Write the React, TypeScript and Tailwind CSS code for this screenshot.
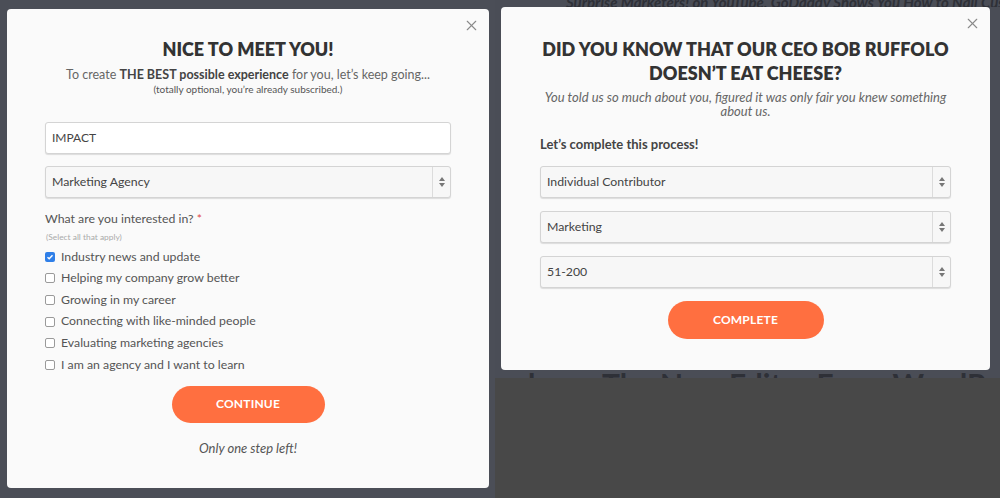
import { X } from 'lucide-react'

const font = "font-['Lato','Open_Sans',sans-serif]"

function CloseButton() {
  return (
    <button className="flex h-[17px] w-[17px] items-center justify-center text-[#8a8a8a]" aria-label="Close">
      <X size={17} strokeWidth={1.6} />
    </button>
  )
}

function SelectBox({ value }: { value: string }) {
  return (
    <div className="flex h-[32px] w-full items-stretch rounded-[3px] border border-[#d4d4d4] bg-[#f7f7f7] shadow-[0_1px_1px_rgba(0,0,0,0.12)]">
      <div className="flex flex-1 items-center pl-[6px] text-[12.3px] text-[#444]">{value}</div>
      <div className="flex w-[18px] flex-col items-center justify-center gap-[2px] border-l border-[#dcdcdc]">
        <span className="block h-0 w-0 border-x-[3px] border-b-[4px] border-x-transparent border-b-[#777]" />
        <span className="block h-0 w-0 border-x-[3px] border-t-[4px] border-x-transparent border-t-[#777]" />
      </div>
    </div>
  )
}

function Check({ label, checked }: { label: string; checked?: boolean }) {
  return (
    <div className="flex h-[21.6px] items-center gap-[6px]">
      {checked ? (
        <span className="flex h-[10px] w-[10px] items-center justify-center rounded-[2px] bg-[#2f7fe8]">
          <svg width="8" height="8" viewBox="0 0 8 8">
            <path d="M1.5 4.2 L3.2 5.8 L6.5 2.2" stroke="white" strokeWidth="1.4" fill="none" />
          </svg>
        </span>
      ) : (
        <span className="h-[10px] w-[10px] rounded-[2px] border border-[#9a9a9a] bg-white" />
      )}
      <span className="text-[12.3px] text-[#555]">{label}</span>
    </div>
  )
}

function OrangeButton({ label, w, h }: { label: string; w: string; h: string }) {
  return (
    <button className={`${w} ${h} rounded-full bg-[#ff6f40] text-[12px] font-bold tracking-[0.2px] text-white`}>
      {label}
    </button>
  )
}

function LeftModal() {
  return (
    <div className="flex h-[479px] w-[482px] flex-col rounded-[4px] bg-[#fafafa] px-[38px] pt-[8px]">
      <div className="-mr-[29px] flex justify-end">
        <CloseButton />
      </div>
      <h2 className="mt-[3px] text-center text-[18px] font-extrabold leading-[24px] text-[#333]">NICE TO MEET YOU!</h2>
      <p className="mt-[6px] text-center text-[12.5px] leading-[16px] text-[#666]">
        To create <b className="text-[#444]">THE BEST possible experience</b> for you, let’s keep going...
      </p>
      <p className="text-center text-[10px] leading-[12px] text-[#555]">(totally optional, you’re already subscribed.)</p>

      <div className="mt-[27px] flex h-[32px] items-center rounded-[3px] border border-[#d4d4d4] bg-white pl-[6px] text-[12px] text-[#444] shadow-[0_1px_1px_rgba(0,0,0,0.12)]">
        IMPACT
      </div>
      <div className="mt-[12px]">
        <SelectBox value="Marketing Agency" />
      </div>

      <p className="mt-[13px] text-[12.3px] leading-[16px] text-[#555]">
        What are you interested in? <span className="text-[#e04848]">*</span>
      </p>
      <p className="mt-[5px] pl-[1px] text-[8.4px] leading-[10px] text-[#aaa]">(Select all that apply)</p>
      <div className="mt-[4px] flex flex-col">
        <Check label="Industry news and update" checked />
        <Check label="Helping my company grow better" />
        <Check label="Growing in my career" />
        <Check label="Connecting with like-minded people" />
        <Check label="Evaluating marketing agencies" />
        <Check label="I am an agency and I want to learn" />
      </div>
      <div className="mt-[10px] flex justify-center">
        <OrangeButton label="CONTINUE" w="w-[153px]" h="h-[37px]" />
      </div>
      <p className="mt-[16px] text-center text-[13px] italic leading-[18px] text-[#555]">Only one step left!</p>
    </div>
  )
}

function RightModal() {
  return (
    <div className="flex h-[363px] w-[489px] flex-col rounded-[4px] bg-[#fafafa] px-[39px] pt-[8px]">
      <div className="-mr-[30px] flex justify-end">
        <CloseButton />
      </div>
      <h2 className="mt-[5px] whitespace-nowrap text-center text-[18px] font-extrabold leading-[24px] text-[#333]">
        DID YOU KNOW THAT OUR CEO BOB RUFFOLO
        <br />
        DOESN’T EAT CHEESE?
      </h2>
      <p className="mt-[5px] whitespace-nowrap text-center text-[13px] italic leading-[14px] text-[#666]">
        You told us so much about you, figured it was only fair you knew something
        <br />
        about us.
      </p>
      <p className="mt-[18px] text-[13px] font-bold leading-[16px] text-[#444]">Let’s complete this process!</p>
      <div className="mt-[14px] flex flex-col gap-[13px]">
        <SelectBox value="Individual Contributor" />
        <SelectBox value="Marketing" />
        <SelectBox value="51-200" />
      </div>
      <div className="mt-[13px] flex justify-center">
        <OrangeButton label="COMPLETE" w="w-[156px]" h="h-[38px]" />
      </div>
    </div>
  )
}

export default function App() {
  return (
    <div className={`flex h-[498px] w-[1000px] overflow-hidden ${font}`}>
      <div className="w-[495px] shrink-0 bg-[#4b4e57] pl-[7px] pt-[9px]">
        <LeftModal />
      </div>
      <div className="flex flex-1 flex-col">
        <div className="flex h-[378px] flex-col bg-[#4a4d56]">
          <div className="h-[7px] overflow-hidden pl-[71px]">
            <p className="-mt-[9px] whitespace-nowrap text-[15px] font-bold italic text-[#2e3037]">
              Surprise Marketers! on YouTube, GoDaddy Shows You How to Nail Customer
            </p>
          </div>
          <div className="pl-[6px]">
            <RightModal />
          </div>
          <div className="h-[8px] overflow-hidden">
            <p className="-mt-[3px] whitespace-nowrap text-[30px] font-bold leading-[34px] text-[#2e3037]">
              enberg: The New Editor From WordPress
            </p>
          </div>
        </div>
        <div className="flex-1 bg-[#484848]" />
      </div>
    </div>
  )
}
